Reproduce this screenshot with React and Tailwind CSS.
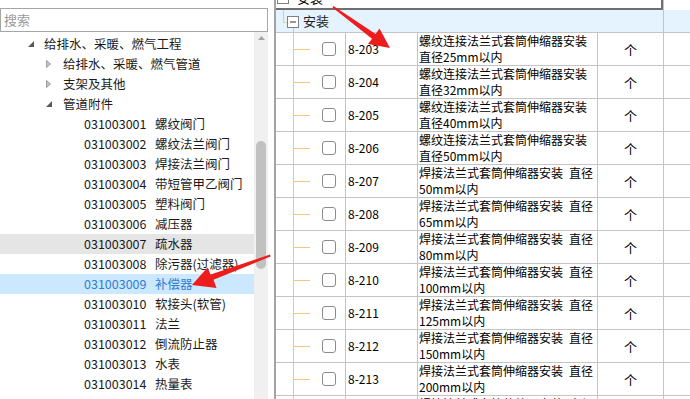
import React from 'react';

// left tree: level 0/1 nodes, then the code items under 管道附件
const treeNodes = [
    { level: 0, open: true, label: '给排水、采暖、燃气工程' },
    { level: 1, open: false, label: '给排水、采暖、燃气管道' },
    { level: 1, open: false, label: '支架及其他' },
    { level: 1, open: true, label: '管道附件' },
];

const codeItems = [
    ['031003001', '螺纹阀门'],
    ['031003002', '螺纹法兰阀门'],
    ['031003003', '焊接法兰阀门'],
    ['031003004', '带短管甲乙阀门'],
    ['031003005', '塑料阀门'],
    ['031003006', '减压器'],
    ['031003007', '疏水器'],
    ['031003008', '除污器(过滤器)'],
    ['031003009', '补偿器'],
    ['031003010', '软接头(软管)'],
    ['031003011', '法兰'],
    ['031003012', '倒流防止器'],
    ['031003013', '水表'],
    ['031003014', '热量表'],
];

const weld = '焊接法兰式套筒伸缩器安装\u2002直径';
const screw = '螺纹连接法兰式套筒伸缩器安装';

const rows = [
    ['8-203', screw, '直径25mm以内'],
    ['8-204', screw, '直径32mm以内'],
    ['8-205', screw, '直径40mm以内'],
    ['8-206', screw, '直径50mm以内'],
    ['8-207', weld, '50mm以内'],
    ['8-208', weld, '65mm以内'],
    ['8-209', weld, '80mm以内'],
    ['8-210', weld, '100mm以内'],
    ['8-211', weld, '125mm以内'],
    ['8-212', weld, '150mm以内'],
    ['8-213', weld, '200mm以内'],
    ['8-214', weld, '250mm以内'],
];

const Toggle = ({ open }) =>
    open ? (
        <svg width="6" height="6" viewBox="0 0 6 6">
            <polygon points="6,0 6,6 0,6" fill="#595959" />
        </svg>
    ) : (
        <svg width="5" height="8" viewBox="0 0 5 8">
            <polygon points="0.5,0.5 4.5,4 0.5,7.5" fill="#c4c4c4" stroke="#8c8c8c" strokeWidth="0.8" />
        </svg>
    );

const TreePanel = () => (
    <div className="w-[268px] flex flex-col shrink-0">
        <div className="pt-[8px]">
            <div className="h-[24px] border border-[#a6a6a6] flex items-center pl-[3px] text-[13px] text-[#9a9a9a]">
                搜索
            </div>
        </div>
        <div className="flex flex-1 min-h-0">
            <div className="flex-1 pt-[2px] text-[12.5px] text-[#1a1a1a]">
                {treeNodes.map((n, i) => (
                    <div
                        key={i}
                        className={`h-[20px] flex items-center ${n.level === 0 ? 'pl-[28px]' : 'pl-[46px]'}`}
                    >
                        <span className={`flex items-center ${n.level === 0 ? 'w-[16px]' : 'w-[17px]'}`}>
                            <Toggle open={n.open} />
                        </span>
                        <span>{n.label}</span>
                    </div>
                ))}
                {codeItems.map(([code, name]) => {
                    const selected = code === '031003009';
                    const hover = code === '031003007';
                    return (
                        <div
                            key={code}
                            className={`h-[20px] flex items-center pl-[84px] ${selected ? 'bg-[#cce8ff] text-[#2f7cd3]' : ''} ${hover ? 'bg-[#e5e5e5]' : ''}`}
                        >
                            <span className="w-[71px]">{code}</span>
                            <span>{name}</span>
                        </div>
                    );
                })}
            </div>
            {/* scrollbar */}
            <div className="w-[14px] bg-[#f0f0f0] flex flex-col items-center">
                <svg width="7" height="5" viewBox="0 0 7 5" className="mt-[4px]">
                    <polygon points="3.5,0 7,4 0,4" fill="#a3a3a3" />
                </svg>
                <div className="mt-[100px] w-[10px] h-[128px] rounded-full bg-[#c1c1c1]" />
            </div>
        </div>
    </div>
);

const GridPanel = () => (
    <div className="ml-[6px] flex-1 border-l-2 border-[#a3a3a3] flex flex-col overflow-hidden">
        {/* partially scrolled-out row */}
        <div className="h-[10px] flex shrink-0">
            <div className="w-[387px] h-[10px] border-b-2 border-r-2 border-[#6f6f6f] overflow-hidden">
                <div className="-mt-[13px] h-[22px] flex items-center">
                    <div className="ml-[1px] w-[12px] h-[12px] border border-[#808080] bg-white" />
                    <span className="ml-[8px] text-[13px]">安装</span>
                </div>
            </div>
            <div className="flex-1 border-l border-[#c4c4c4]" />
        </div>

        {/* group header */}
        <div className="h-[23px] flex shrink-0 bg-[#e5f3ff] border-b border-[#c4c4c4]">
            <div className="w-[387px] flex items-center">
                <svg width="24" height="22" viewBox="0 0 24 22" className="self-start">
                    <path d="M7.5 0 V12.5 H11" stroke="#f5c77e" fill="none" />
                    <rect x="11.5" y="6.5" width="11" height="11" fill="#fff" stroke="#808080" />
                    <path d="M14 12 H20" stroke="#333" />
                    <path d="M17.5 18 V22" stroke="#f5c77e" />
                </svg>
                <span className="ml-[3px] text-[13px] text-[#222]">安装</span>
            </div>
            <div className="flex-1 border-l border-[#c4c4c4]" />
        </div>

        {rows.map(([code, l1, l2]) => (
            <div key={code} className="h-[33px] flex shrink-0 border-b border-[#c4c4c4] text-[12px] text-black">
                <div className="w-[69px] flex items-center">
                    <div className="ml-[17px] w-[17px] h-full border-l border-[#f5c77e] flex items-center">
                        <div className="w-full h-px bg-[#f5c77e]" />
                    </div>
                    <div className="ml-[12px] w-[14px] h-[14px] rounded-[3px] border border-[#8c8c8c] bg-white" />
                </div>
                <div className="w-[72px] border-l border-[#c4c4c4] flex items-center pl-[2px]">{code}</div>
                <div className="w-[180px] border-l border-[#c4c4c4] pl-[1px] leading-[16px] whitespace-nowrap overflow-hidden">
                    <div>{l1}</div>
                    <div>{l2}</div>
                </div>
                <div className="w-[66px] border-l border-[#c4c4c4] flex items-center justify-center pt-[2px] text-[13px]">
                    个
                </div>
                <div className="flex-1 border-l border-[#c4c4c4]" />
            </div>
        ))}
    </div>
);

export default function App() {
    return (
        <div className="relative w-[690px] h-[399px] overflow-hidden bg-white flex font-['Noto_Sans_CJK_SC','Noto_Sans',sans-serif]">
            <TreePanel />
            <GridPanel />

            {/* red annotation arrows */}
            <svg className="absolute inset-0 pointer-events-none" width="690" height="399" viewBox="0 0 690 399">
                <polygon
                    points="332.5,7.5 333.5,6 375.6,33.9 379.5,28.5 390,48 368,44 372,38.7"
                    fill="#ee1d1d"
                />
                <polygon
                    points="270,254.5 270.5,256.5 213.5,279.8 216.5,288 192,285 207.5,267.5 210.6,274.5"
                    fill="#ee1d1d"
                />
            </svg>
        </div>
    );
}
